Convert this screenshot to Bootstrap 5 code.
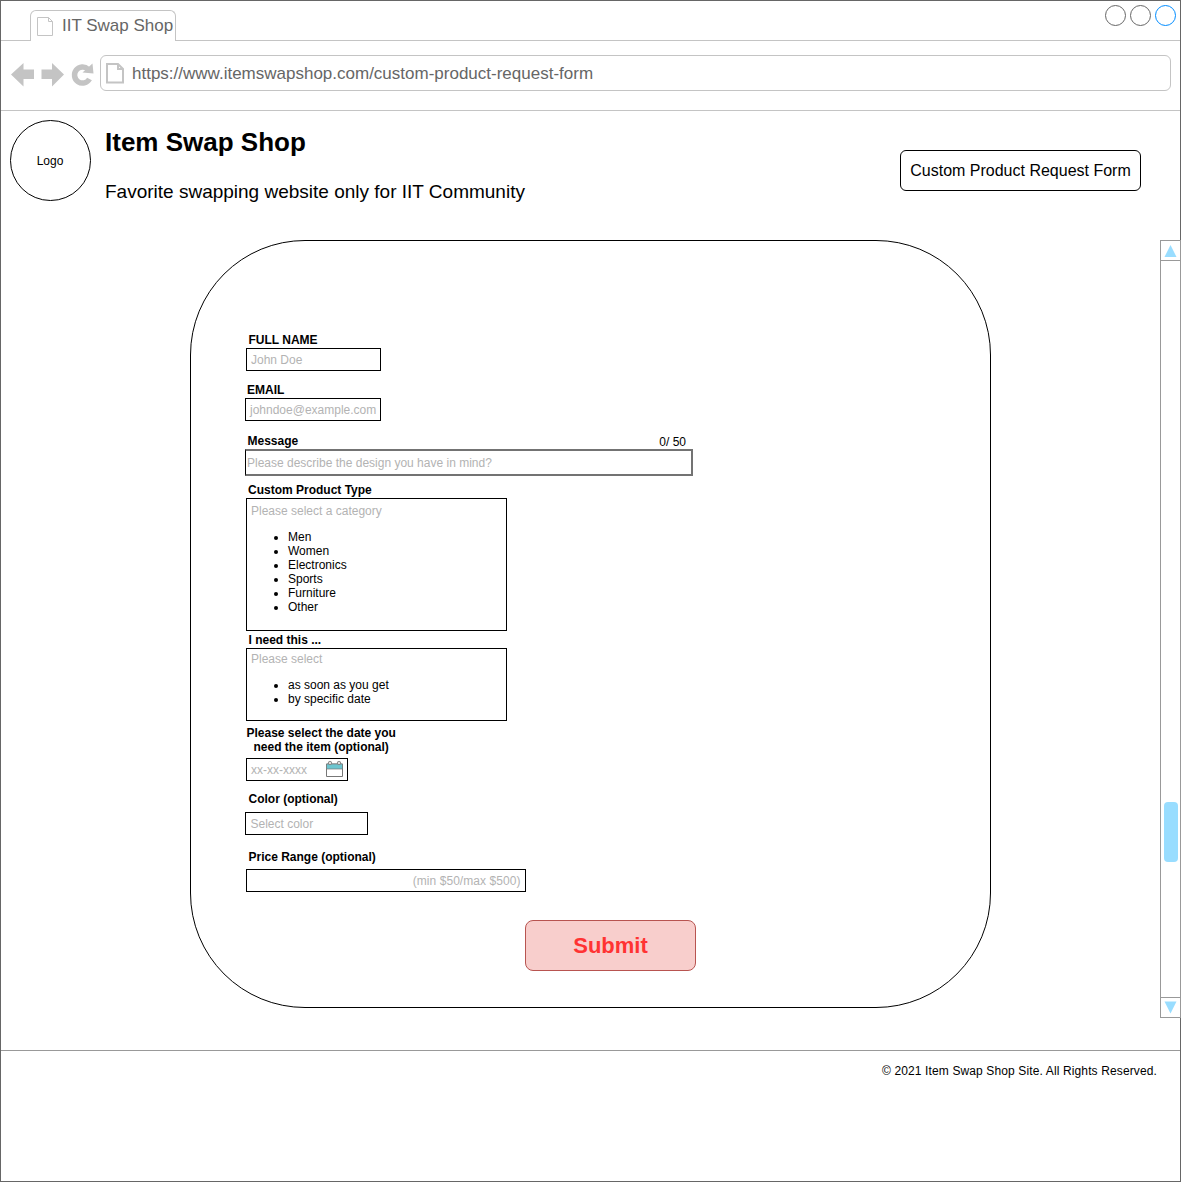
<!DOCTYPE html>
<html lang="en">
<head>
<meta charset="utf-8">
<meta name="viewport" content="width=device-width, initial-scale=1">
<title>Item Swap Shop</title>
<link href="https://cdn.jsdelivr.net/npm/bootstrap@5.3.0/dist/css/bootstrap.min.css" rel="stylesheet">
<style>
body{font-family:"Liberation Sans",Arial,sans-serif;font-size:12px;line-height:14px;color:#000;background:#fff}
.browser{width:1181px;height:1182px;border:1px solid #666}
.tabstrip{height:40px;border-bottom:1px solid #c4c4c4;padding:9px 4px 0 29px}
.tab-page{width:146px;height:31px;border:1px solid #c4c4c4;border-bottom:0;border-radius:6px 6px 0 0;background:#fff;font-size:17px;color:#666;padding-left:6px;gap:8px;white-space:nowrap}
.dots{gap:4px;margin-top:-5px}
.dot{width:21px;height:21px;border:1px solid #666;border-radius:50%}
.dot-blue{border-color:#008cff}
.toolbar{height:70px;border-bottom:1px solid #c4c4c4;padding:14px 9px 0 10px}
.address{height:36px;border:1px solid #c4c4c4;border-radius:6px;font-size:17px;color:#666;padding-left:4px;gap:8px}
.address span{padding-top:2px}
.masthead{height:129px;padding:9px 39px 0 9px}
.logo{width:81px;height:81px;border:1px solid #000;border-radius:50%;padding-right:1px}
.brand{margin-left:14px}
.brand h1{font-size:26px;line-height:30px;font-weight:700;margin:7px 0 24px}
.brand p{font-size:19px;line-height:22px;margin:0}
.request{width:241px;height:41px;border:1px solid #000;border-radius:6px;font-size:16px;margin-top:30px}
.stage{height:778px;padding-left:189px}
.panel{width:801px;height:768px;border:1px solid #000;border-radius:115px;padding:92px 0 0 54px}
.fld label{display:block;font-weight:700;padding-left:3.5px}
.entry{border:1px solid #000;height:23px;line-height:22px;padding:0 4px;color:#b3b3b3;margin-left:1px}
.f-name .entry{width:135px;margin-top:1px}
.f-email{margin-top:12px}
.f-email label{padding-left:2px}
.f-email .entry{width:136px;margin:1px 0 0}
.f-message{width:448px;margin-top:13px}
.f-message label{padding-left:2.5px}
.counter{padding:1px 7px 0 0;height:14px}
.f-message .entry{height:27px;border:2px solid #737373;border-left:1px solid #000;line-height:24px;padding-left:1px;margin:1px 0 0}
.f-type{margin-top:7px}
.f-type label{padding-left:3px}
.f-type .entry,.f-need .entry{width:261px;line-height:14px;margin-top:1px}
.f-type .entry{height:133px;padding-top:5px}
.f-need{margin-top:2px}
.f-need .entry{height:73px;padding-top:3px}
.entry ul{color:#000;padding-left:37px;margin:12px 0 0}
.f-date{margin-top:5px}
.f-date label{padding-left:1.5px}
.second-line{padding-left:7px}
.f-date .entry{width:102px;margin-top:4px;padding-right:4px}
.f-color{margin-top:11px}
.f-color .entry{width:123px;margin:6px 0 0;padding-left:4.5px}
.f-price{margin-top:15px}
.f-price .entry{width:280px;margin-top:5px;padding-right:4.5px;letter-spacing:.06px}
.submit{width:171px;height:51px;border:1px solid #b85450;border-radius:8px;background:#f8cecc;color:#f33;font-size:22px;font-weight:700;margin:28px 0 0 280px;padding:0}
.scroller{width:21px;border:1px solid #999;margin-right:-1px}
.scroll-end{height:20px}
.scroll-end.top-end{border-bottom:1px solid #999}
.scroll-end.bottom-end{border-top:1px solid #999}
.thumb{width:14px;height:60px;border-radius:4px;background:#9df;margin:541px 0 0 2.5px}
.footer-bar{margin-top:32px;border-top:1px solid #999;padding:13px 23px 0;letter-spacing:.125px}
</style>
</head>
<body>
<div class="browser">
 <div class="tabstrip d-flex justify-content-between">
  <div class="tab-page d-flex align-items-center">
   <svg class="flex-shrink-0" width="17" height="20" fill="none" stroke="#c4c4c4"><path d="M.5 1.5H11.5L15.5 5.5V19.5H.5ZM11.5 1.5V5.5H15.5"/></svg><span>IIT Swap Shop</span>
  </div>
  <div class="dots d-flex"><div class="dot"></div><div class="dot"></div><div class="dot dot-blue"></div></div>
 </div>
 <div class="toolbar d-flex">
  <svg width="89" height="36" fill="#c4c4c4"><path d="M0 19.500L12.500 8V14.500H23V24H12.500V31.500Z"/><path d="M53 19.500L41 8V14.500H30.500V24H41V31.500Z"/><path d="M77 14.200A8 8 0 1 0 78.500 24" fill="none" stroke="#c4c4c4" stroke-width="5.500"/><path d="M81.500 8.500L82.500 18.500L71.500 17.500Z"/></svg>
  <div class="address flex-grow-1 d-flex align-items-center">
   <svg width="19" height="22" fill="none" stroke="#c4c4c4" stroke-width="2"><path d="M2 2H13L18 7V20.500H2ZM13 2V7H18"/></svg><span>https://www.itemswapshop.com/custom-product-request-form</span>
  </div>
 </div>
 <header class="masthead d-flex">
  <div class="logo d-flex align-items-center justify-content-center">Logo</div>
  <div class="brand flex-grow-1"><h1>Item Swap Shop</h1><p>Favorite swapping website only for IIT Community</p></div>
  <div class="request d-flex align-items-center justify-content-center">Custom Product Request Form</div>
 </header>
 <main class="stage d-flex justify-content-between">
  <form class="panel">
   <div class="fld f-name"><label>FULL NAME</label><div class="entry">John Doe</div></div>
   <div class="fld f-email"><label>EMAIL</label><div class="entry">johndoe@example.com</div></div>
   <div class="fld f-message">
    <div class="d-flex justify-content-between"><label>Message</label><div class="counter">0/ 50</div></div>
    <div class="entry">Please describe the design you have in mind?</div>
   </div>
   <div class="fld f-type"><label>Custom Product Type</label>
    <div class="entry">Please select a category
     <ul><li>Men</li><li>Women</li><li>Electronics</li><li>Sports</li><li>Furniture</li><li>Other</li></ul>
    </div>
   </div>
   <div class="fld f-need"><label>I need this ...</label>
    <div class="entry">Please select
     <ul><li>as soon as you get</li><li>by specific date</li></ul>
    </div>
   </div>
   <div class="fld f-date"><label>Please select the date you<br><span class="second-line">need the item (optional)</span></label>
    <div class="entry d-flex justify-content-between">xx-xx-xxxx
     <svg width="18" height="20" viewBox="0 0 18 20"><path d="M1.500 5H17.500V17.500H1.500Z" fill="#fff" stroke="#777"/><path d="M1.500 5H17.500V10H1.500Z" fill="#6cc5cf" stroke="#777" stroke-width=".7"/><circle cx="5" cy="4" r="1.700" fill="#ddd" stroke="#777" stroke-width=".8"/><circle cx="14" cy="4" r="1.700" fill="#ddd" stroke="#777" stroke-width=".8"/></svg>
    </div>
   </div>
   <div class="fld f-color"><label>Color (optional)</label><div class="entry">Select color</div></div>
   <div class="fld f-price"><label>Price Range (optional)</label><div class="entry text-end">(min $50/max $500)</div></div>
   <button class="submit" type="button">Submit</button>
  </form>
  <div class="scroller d-flex flex-column">
   <div class="scroll-end top-end"><svg class="d-block" width="19" height="19" fill="#9df"><path d="M9.500 4L15.500 16H3.500Z"/></svg></div>
   <div class="thumb"></div>
   <div class="scroll-end bottom-end mt-auto"><svg class="d-block" width="19" height="19" fill="#9df"><path d="M9.500 15.500L15.500 3.500H3.500Z"/></svg></div>
  </div>
 </main>
 <footer class="footer-bar text-end">© 2021 Item Swap Shop Site. All Rights Reserved.</footer>
</div>
<script src="https://cdn.jsdelivr.net/npm/bootstrap@5.3.0/dist/js/bootstrap.bundle.min.js"></script>
</body>
</html>
